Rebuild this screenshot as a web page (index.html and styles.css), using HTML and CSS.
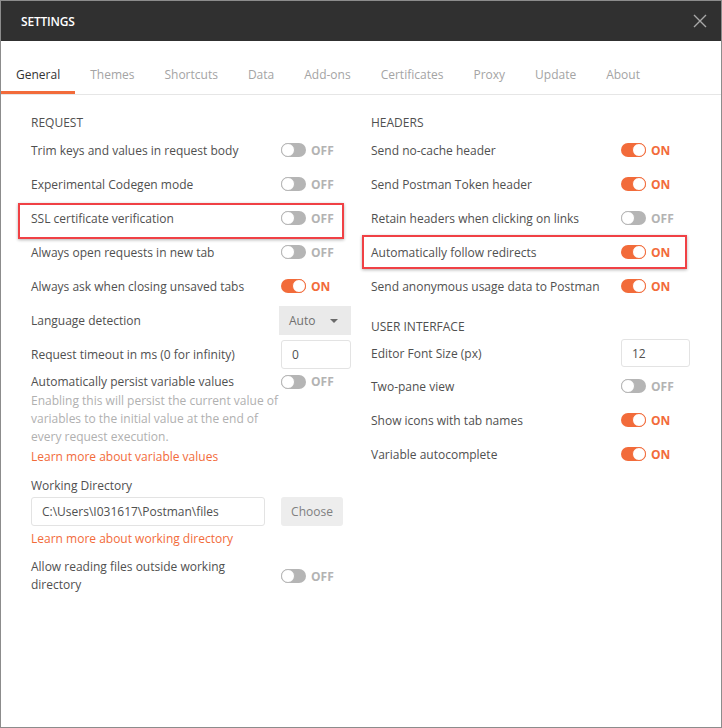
FILE: index.html
```html
<!DOCTYPE html>
<html>
<head>
<meta charset="utf-8">
<link rel="stylesheet" href="styles.css">
</head>
<body>
<div class="window">
  <div class="titlebar">
    <span class="title">SETTINGS</span>
    <svg class="close" width="14" height="14" viewBox="0 0 14 14"><path d="M1 1 L13 13 M13 1 L1 13" stroke="#a8a8a8" stroke-width="1.4" fill="none"/></svg>
  </div>
  <div class="tabs">
    <div class="tab active">General</div>
    <div class="tab">Themes</div>
    <div class="tab">Shortcuts</div>
    <div class="tab">Data</div>
    <div class="tab">Add-ons</div>
    <div class="tab">Certificates</div>
    <div class="tab">Proxy</div>
    <div class="tab">Update</div>
    <div class="tab">About</div>
  </div>
  <div class="content">
    <div class="col">
      <div class="heading">REQUEST</div>
      <div class="row"><span class="label">Trim keys and values in request body</span><span class="toggle off"><i></i></span><span class="state off">OFF</span></div>
      <div class="row"><span class="label">Experimental Codegen mode</span><span class="toggle off"><i></i></span><span class="state off">OFF</span></div>
      <div class="row hl-left"><span class="label">SSL certificate verification</span><span class="toggle off"><i></i></span><span class="state off">OFF</span></div>
      <div class="row"><span class="label">Always open requests in new tab</span><span class="toggle off"><i></i></span><span class="state off">OFF</span></div>
      <div class="row"><span class="label">Always ask when closing unsaved tabs</span><span class="toggle on"><i></i></span><span class="state on">ON</span></div>
      <div class="row"><span class="label">Language detection</span><span class="select">Auto<b class="caret"></b></span></div>
      <div class="row"><span class="label">Request timeout in ms (0 for infinity)</span><span class="input small">0</span></div>
      <div class="row persist"><span class="label">Automatically persist variable values</span><span class="toggle off"><i></i></span><span class="state off">OFF</span></div>
      <div class="desc">Enabling this will persist the current value of variables to the initial value at the end of every request execution.</div>
      <div class="link first">Learn more about variable values</div>
      <div class="sublabel">Working Directory</div>
      <div class="dirrow"><span class="input wide">C:\Users\I031617\Postman\files</span><span class="btn">Choose</span></div>
      <div class="link second">Learn more about working directory</div>
      <div class="row two"><span class="label">Allow reading files outside working directory</span><span class="toggle off"><i></i></span><span class="state off">OFF</span></div>
    </div>
    <div class="col">
      <div class="heading">HEADERS</div>
      <div class="row"><span class="label">Send no-cache header</span><span class="toggle on"><i></i></span><span class="state on">ON</span></div>
      <div class="row"><span class="label">Send Postman Token header</span><span class="toggle on"><i></i></span><span class="state on">ON</span></div>
      <div class="row"><span class="label">Retain headers when clicking on links</span><span class="toggle off"><i></i></span><span class="state off">OFF</span></div>
      <div class="row hl-right"><span class="label">Automatically follow redirects</span><span class="toggle on"><i></i></span><span class="state on">ON</span></div>
      <div class="row"><span class="label">Send anonymous usage data to Postman</span><span class="toggle on"><i></i></span><span class="state on">ON</span></div>
      <div class="heading ui">USER INTERFACE</div>
      <div class="row editor"><span class="label">Editor Font Size (px)</span><span class="input small">12</span></div>
      <div class="row"><span class="label">Two-pane view</span><span class="toggle off"><i></i></span><span class="state off">OFF</span></div>
      <div class="row"><span class="label">Show icons with tab names</span><span class="toggle on"><i></i></span><span class="state on">ON</span></div>
      <div class="row"><span class="label">Variable autocomplete</span><span class="toggle on"><i></i></span><span class="state on">ON</span></div>
    </div>
  </div>
</div>
</body>
</html>
```
FILE: styles.css
```css
* { box-sizing: border-box; }
html, body { margin: 0; padding: 0; background: #fff; }
body { font-family: "Open Sans", "Noto Sans", sans-serif; font-size: 12px; color: #505050; }
.window {
  width: 722px; height: 728px;
  border: 1px solid #8c8c8c;
  background: #fff;
  display: flex; flex-direction: column;
}
.titlebar {
  height: 40px; background: #303030;
  display: flex; align-items: center; justify-content: space-between;
  padding: 0 14px 0 20px;
}
.title { color: #fff; font-size: 12px; font-weight: 600; letter-spacing: -0.2px; }
.close { display: block; }
.tabs {
  height: 54px; display: flex;
  border-bottom: 1px solid #e6e6e6;
}
.tab {
  padding: 25px 15px 0; line-height: 18px; height: 53px;
  color: #a4a4a4; border-bottom: 3px solid transparent;
}
.tab.active { color: #333; border-bottom-color: #f26b3a; }
.content {
  display: flex; gap: 20px;
  padding: 18px 0 0 30px;
}
.col { width: 320px; display: flex; flex-direction: column; }
.heading { line-height: 20px; height: 20px; color: #505050; }
.heading.ui { margin-top: 14px; }
.row { height: 34px; display: flex; align-items: center; position: relative; }
.row.editor { height: 32px; }
.label { width: 250px; flex: none; }
.toggle {
  width: 25px; height: 14px; border-radius: 7px; position: relative; flex: none;
}
.toggle i {
  position: absolute; top: 0; width: 14px; height: 14px; border-radius: 50%;
  background: #fff;
}
.toggle.off { background: #b5b5b5; }
.toggle.off i { left: 0; border: 1px solid #b5b5b5; }
.toggle.on { background: #f26b3a; }
.toggle.on i { right: 0; border: 1px solid #f26b3a; }
.state { margin-left: 5px; font-weight: 700; }
.state.off { color: #b3b3b3; }
.state.on { color: #f26b3a; }
.select {
  margin-left: -2px; width: 72px; height: 29px; background: #eaeaea;
  display: flex; align-items: center; padding-left: 10px; position: relative; color: #707070;
}
.caret {
  position: absolute; right: 13px; top: 13px;
  border-left: 4px solid transparent; border-right: 4px solid transparent;
  border-top: 4px solid #6a6a6a;
}
.input {
  height: 29px; border: 1px solid #e3e3e3; border-radius: 3px; background: #fff;
  display: flex; align-items: center; padding-left: 10px; color: #505050;
}
.input.small { width: 70px; }
.row.editor .input.small { width: 69px; height: 28px; }
.row.persist { height: 21px; }
.desc { color: #b0b0b0; line-height: 18px; width: 252px; }
.link { color: #f26b3a; line-height: 18px; }
.link.first { margin-top: 2px; }
.link.second { margin-top: 4px; }
.sublabel { margin-top: 10px; line-height: 20px; }
.dirrow { margin-top: 1px; display: flex; gap: 16px; }
.input.wide { width: 234px; }
.btn {
  width: 62px; height: 29px; background: #ededed; color: #808080; border-radius: 3px;
  display: flex; align-items: center; justify-content: center;
}
.row.two { margin-top: 10px; height: 36px; }
.row.two .label { line-height: 18px; width: 220px; margin-right: 30px; }
.hl-left::after {
  content: ""; position: absolute; left: -13px; top: 2px; width: 322px; height: 32px;
  border: 2px solid #f04145; box-shadow: 0 1px 3px rgba(0,0,0,0.3);
}
.hl-right::after {
  content: ""; position: absolute; left: -9px; top: 0; width: 321px; height: 30px;
  border: 2px solid #f04145; box-shadow: 0 1px 3px rgba(0,0,0,0.3);
}
```
